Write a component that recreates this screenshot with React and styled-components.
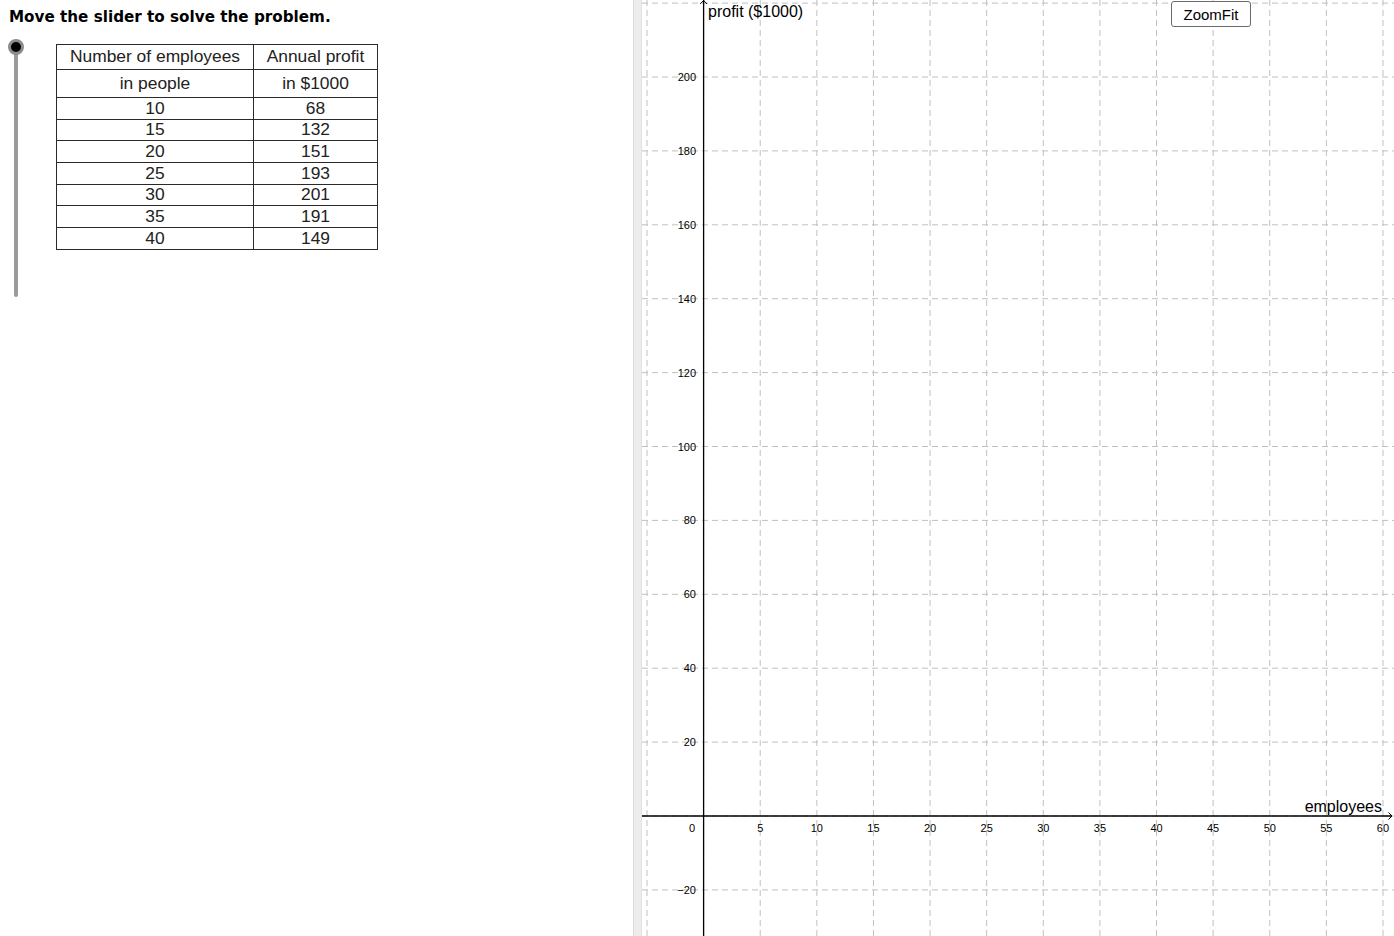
import React from "react";
import styled, { createGlobalStyle } from "styled-components";

const GlobalStyle = createGlobalStyle`
  html, body {
    margin: 0;
    padding: 0;
    background: #fff;
    overflow: hidden;
  }
`;

const rows = [
  [10, 68],
  [15, 132],
  [20, 151],
  [25, 193],
  [30, 201],
  [35, 191],
  [40, 149],
];

// graph scale (px per unit), measured from the screenshot
const X0 = 61.6;
const XS = 11.323;
const Y0 = 816;
const YS = 3.695;
const px = (x) => X0 + XS * x;
const py = (y) => Y0 - YS * y;

const App = () => {
  const xTicks = [];
  for (let x = -5; x <= 60; x += 5) xTicks.push(x);
  const yTicks = [];
  for (let y = -20; y <= 220; y += 20) yTicks.push(y);

  return (
    <Page>
      <GlobalStyle />
      <LeftPanel>
        <Title>Move the slider to solve the problem.</Title>
        <Body>
          <Slider>
            <Track />
            <Knob />
          </Slider>
          <Table>
            <colgroup>
              <Col $w={197} />
              <Col $w={124} />
            </colgroup>
            <tbody>
              <tr>
                <HeadCell $h={25}>Number of employees</HeadCell>
                <HeadCell $h={25}>Annual profit</HeadCell>
              </tr>
              <tr>
                <HeadCell $h={28}>in people</HeadCell>
                <HeadCell $h={28}>in $1000</HeadCell>
              </tr>
              {rows.map(([n, p]) => (
                <tr key={n}>
                  <Cell>{n}</Cell>
                  <Cell>{p}</Cell>
                </tr>
              ))}
            </tbody>
          </Table>
        </Body>
      </LeftPanel>
      <Divider />
      <GraphPanel>
        <Graph width="752" height="936" viewBox="0 0 752 936">
          <g stroke="#c0c0c0" strokeWidth="1" strokeDasharray="6 4">
            {xTicks.map((x) => (
              <line key={"gx" + x} x1={px(x)} y1="0" x2={px(x)} y2="936" />
            ))}
            {yTicks.map((y) => (
              <line key={"gy" + y} x1="0" y1={py(y)} x2="752" y2={py(y)} />
            ))}
          </g>
          <g stroke="#000" fill="none">
            <line x1={px(0)} y1="936" x2={px(0)} y2="0" strokeWidth="1.3" />
            <line x1="0" y1={Y0} x2="750" y2={Y0} strokeWidth="1.3" />
            <polyline points={`${px(0) - 3.5},4 ${px(0)},0.5 ${px(0) + 3.5},4`} strokeWidth="1" />
            <polyline points={`746.5,${Y0 - 3.5} 750,${Y0} 746.5,${Y0 + 3.5}`} strokeWidth="1" />
          </g>
          <g fontFamily="'Liberation Sans', Arial, sans-serif" fontSize="11" fill="#000">
            {xTicks
              .filter((x) => x > 0)
              .map((x) => (
                <text key={"lx" + x} x={px(x)} y="832" textAnchor="middle">
                  {x}
                </text>
              ))}
            {yTicks
              .filter((y) => y !== 0 && y <= 200)
              .map((y) => (
                <text key={"ly" + y} x="54" y={py(y) + 4} textAnchor="end">
                  {y < 0 ? "\u2212" + Math.abs(y) : y}
                </text>
              ))}
            <text x="53" y="832" textAnchor="end">0</text>
          </g>
          <g fontFamily="'Liberation Sans', Arial, sans-serif" fontSize="16" fill="#000">
            <text x="66" y="17">profit ($1000)</text>
            <text x="740" y="812" textAnchor="end">employees</text>
          </g>
        </Graph>
        <ZoomButton>ZoomFit</ZoomButton>
      </GraphPanel>
    </Page>
  );
};

export default App;

const Page = styled.div`
  display: flex;
  width: 1394px;
  height: 936px;
  background: #fff;
`;

const LeftPanel = styled.div`
  width: 633px;
  flex-shrink: 0;
  padding: 6px 0 0 9px;
  box-sizing: border-box;
`;

const Title = styled.div`
  font-family: "DejaVu Sans", "Liberation Sans", sans-serif;
  font-weight: bold;
  font-size: 15.2px;
  color: #000;
  line-height: 22px;
`;

const Body = styled.div`
  display: flex;
  align-items: flex-start;
  margin-top: 16px;
`;

const Slider = styled.div`
  position: relative;
  width: 16px;
  height: 260px;
  margin-top: -3px;
`;

const Track = styled.div`
  position: absolute;
  left: 5px;
  top: 6px;
  width: 4px;
  height: 250px;
  border-radius: 2px;
  background: #9a9a9a;
`;

const Knob = styled.div`
  position: absolute;
  left: -1px;
  top: -2px;
  width: 10px;
  height: 10px;
  border-radius: 50%;
  background: #000;
  border: 3px solid #8c8c8c;
`;

const Table = styled.table`
  border-collapse: collapse;
  table-layout: fixed;
  width: 321px;
  margin-left: 31px;
  font-family: "Liberation Sans", Arial, sans-serif;
  font-size: 17.4px;
  color: #222;
`;

const Col = styled.col`
  width: ${(p) => p.$w}px;
`;

const HeadCell = styled.td`
  border: 1px solid #2a2a2a;
  height: ${(p) => p.$h - 1}px;
  padding: 0;
  text-align: center;
  line-height: 1;
  white-space: nowrap;
`;

const Cell = styled.td`
  border: 1px solid #2a2a2a;
  height: 20.7px;
  padding: 0;
  text-align: center;
  line-height: 1;
`;

const Divider = styled.div`
  width: 7px;
  flex-shrink: 0;
  background: #ededed;
  border-left: 1px solid #dadada;
  border-right: 1px solid #e2e2e2;
`;

const GraphPanel = styled.div`
  position: relative;
  flex: 1;
  overflow: hidden;
`;

const Graph = styled.svg`
  display: block;
`;

const ZoomButton = styled.button`
  position: absolute;
  top: 1px;
  left: 529px;
  width: 80px;
  height: 26px;
  padding: 0;
  background: #fff;
  border: 1px solid #6a6a6a;
  border-radius: 3px;
  font-family: "Liberation Sans", Arial, sans-serif;
  font-size: 15px;
  color: #000;
`;
